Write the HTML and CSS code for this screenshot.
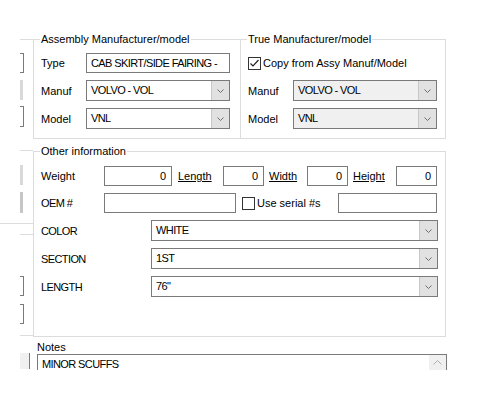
FILE: index.html
```html
<!DOCTYPE html>
<html lang="en">
<head>
    <meta charset="UTF-8">
    <title>Part Details</title>
    <link rel="stylesheet" href="styles.css">
</head>
<body>
    <div class="form">
        <!-- clipped edge of the neighbouring panel -->
        <div class="side">
            <div class="rule rule-a"></div>
            <div class="stub stub-a"></div>
            <div class="bar bar-a"></div>
            <div class="stub stub-b"></div>
            <div class="rule rule-b"></div>
            <div class="bar bar-b"></div>
            <div class="bar bar-c"></div>
            <div class="rule rule-full"></div>
            <div class="rule rule-c"></div>
            <div class="stub stub-c"></div>
            <div class="stub stub-d"></div>
            <div class="rule rule-d"></div>
            <div class="scroll-stub"></div>
        </div>

        <div class="main">
            <div class="top-row">
                <fieldset class="group group-assy">
                    <legend>Assembly Manufacturer/model</legend>
                    <div class="grid">
                        <span>Type</span>
                        <div class="field caps">CAB SKIRT/SIDE FAIRING -</div>
                        <span>Manuf</span>
                        <div class="combo">
                            <span class="value caps">VOLVO - VOL</span>
                            <span class="drop"><svg width="7" height="4" viewBox="0 0 7 4"><path d="M0.5 0.5 3.5 3.5 6.5 0.5"/></svg></span>
                        </div>
                        <span>Model</span>
                        <div class="combo">
                            <span class="value caps">VNL</span>
                            <span class="drop"><svg width="7" height="4" viewBox="0 0 7 4"><path d="M0.5 0.5 3.5 3.5 6.5 0.5"/></svg></span>
                        </div>
                    </div>
                </fieldset>

                <fieldset class="group group-true">
                    <legend>True Manufacturer/model</legend>
                    <div class="grid">
                        <label class="copy">
                            <span class="check"><svg width="11" height="11" viewBox="0 0 11 11"><path d="M1.5 5.5 4 8 9.5 2"/></svg></span>
                            Copy from Assy Manuf/Model
                        </label>
                        <span>Manuf</span>
                        <div class="combo disabled">
                            <span class="value caps">VOLVO - VOL</span>
                            <span class="drop"><svg width="7" height="4" viewBox="0 0 7 4"><path d="M0.5 0.5 3.5 3.5 6.5 0.5"/></svg></span>
                        </div>
                        <span>Model</span>
                        <div class="combo disabled">
                            <span class="value caps">VNL</span>
                            <span class="drop"><svg width="7" height="4" viewBox="0 0 7 4"><path d="M0.5 0.5 3.5 3.5 6.5 0.5"/></svg></span>
                        </div>
                    </div>
                </fieldset>
            </div>

            <fieldset class="group group-other">
                <legend>Other information</legend>
                <div class="rows">
                    <div class="row">
                        <span class="lbl">Weight</span>
                        <div class="field num w-weight">0</div>
                        <span class="ulbl ulbl-length">Length</span>
                        <div class="field num w-dim">0</div>
                        <span class="ulbl ulbl-width">Width</span>
                        <div class="field num w-dim">0</div>
                        <span class="ulbl ulbl-height">Height</span>
                        <div class="field num w-dim">0</div>
                    </div>
                    <div class="row">
                        <span class="lbl caps">OEM #</span>
                        <div class="field w-oem"></div>
                        <label class="serial">
                            <span class="check"></span>
                            Use serial #s
                        </label>
                        <div class="field w-serial"></div>
                    </div>
                    <div class="row row-combo">
                        <span class="lbl-wide caps">COLOR</span>
                        <div class="combo wide">
                            <span class="value caps">WHITE</span>
                            <span class="drop"><svg width="7" height="4" viewBox="0 0 7 4"><path d="M0.5 0.5 3.5 3.5 6.5 0.5"/></svg></span>
                        </div>
                    </div>
                    <div class="row row-combo">
                        <span class="lbl-wide caps">SECTION</span>
                        <div class="combo wide">
                            <span class="value caps">1ST</span>
                            <span class="drop"><svg width="7" height="4" viewBox="0 0 7 4"><path d="M0.5 0.5 3.5 3.5 6.5 0.5"/></svg></span>
                        </div>
                    </div>
                    <div class="row row-combo">
                        <span class="lbl-wide caps">LENGTH</span>
                        <div class="combo wide">
                            <span class="value caps">76"</span>
                            <span class="drop"><svg width="7" height="4" viewBox="0 0 7 4"><path d="M0.5 0.5 3.5 3.5 6.5 0.5"/></svg></span>
                        </div>
                    </div>
                </div>
            </fieldset>

            <div class="notes-label">Notes</div>
            <div class="notes">
                <span class="notes-text caps">MINOR SCUFFS</span>
                <span class="scroll-up"><svg width="9" height="5" viewBox="0 0 9 5"><path d="M0.5 4.5 4.5 0.5 8.5 4.5"/></svg></span>
            </div>
        </div>
    </div>
</body>
</html>
```

FILE: styles.css
```css
body {
    margin: 0;
    font-family: "Liberation Sans", Arial, sans-serif;
    font-size: 11px;
    color: #000;
    background-color: #fff;
}
.form {
    display: flex;
}
.caps {
    letter-spacing: -0.6px;
}

/* neighbouring panel, cut off at the left edge */
.side {
    flex: none;
    width: 33px;
    display: flex;
    flex-direction: column;
}
.rule {
    height: 1px;
    margin-left: 20px;
    background-color: #dcdcdc;
}
.rule-a { margin-top: 39px; }
.rule-b { margin-top: 23px; }
.rule-full { margin-top: 10px; margin-left: 0; }
.rule-c { margin-top: 10px; }
.rule-d { margin-top: 11px; }
.stub {
    box-sizing: border-box;
    width: 4px;
    height: 20px;
    margin-left: 20px;
    border: 1px solid #7a7a7a;
    border-left: none;
}
.stub-a { margin-top: 13px; }
.stub-b { margin-top: 6px; height: 21px; }
.stub-c { margin-top: 41px; }
.stub-d { margin-top: 8px; }
.bar {
    width: 3px;
    height: 20px;
    margin-left: 20px;
    background-color: #d9d9d9;
}
.bar-a { margin-top: 7px; }
.bar-b { margin-top: 14px; }
.bar-c { margin-top: 7px; height: 21px; background-color: #c6c6c6; }
.scroll-stub {
    box-sizing: border-box;
    width: 10px;
    height: 16px;
    margin-top: 17px;
    margin-left: 20px;
    background-color: #f0f0f0;
    border-right: 1px solid #7a7a7a;
}

.main {
    flex: none;
    width: 414px;
    padding-top: 32px;
}
.top-row {
    display: flex;
}

/* group boxes */
.group {
    box-sizing: border-box;
    margin: 0;
    min-width: 0;
    border: 1px solid #dcdcdc;
}
.group legend {
    padding: 0 1px;
    margin-left: -1px;
    line-height: 14px;
}
.group-assy {
    width: 207px;
    border-right: none;
    padding: 7px 10px 9px 7px;
}
.group-true {
    width: 206px;
    padding: 7px 8px 9px 7px;
}
.group-other {
    width: 413px;
    margin-top: 5px;
    padding: 8px 7px 39px 7px;
}
.grid {
    display: grid;
    grid-template-columns: 45px 144px;
    grid-template-rows: 20px 21px 21px;
    row-gap: 7px;
    align-items: center;
}
.copy {
    grid-column: 1 / -1;
    display: flex;
    align-items: center;
    gap: 2px;
}

/* inputs */
.field {
    box-sizing: border-box;
    height: 20px;
    padding: 0 4px;
    border: 1px solid #7a7a7a;
    background-color: #fff;
    line-height: 18px;
    white-space: nowrap;
    overflow: hidden;
}
.field.num {
    text-align: right;
    padding-right: 5px;
}
.combo {
    box-sizing: border-box;
    display: flex;
    height: 21px;
    border: 1px solid #7a7a7a;
    background-color: #fff;
}
.combo.disabled {
    background-color: #f0f0f0;
}
.combo .value {
    flex: 1;
    padding-left: 4px;
    line-height: 19px;
    white-space: nowrap;
}
.drop {
    width: 17px;
    display: flex;
    align-items: center;
    justify-content: center;
    background-color: #e1e1e1;
    border-left: 1px solid #c8c8c8;
}
.drop svg path {
    fill: none;
    stroke: #6d6d6d;
    stroke-width: 1;
}
.check {
    box-sizing: border-box;
    width: 13px;
    height: 13px;
    border: 1px solid #333;
    background-color: #fff;
    display: flex;
    align-items: center;
    justify-content: center;
}
.check svg path {
    fill: none;
    stroke: #222;
    stroke-width: 1.2;
}

/* other information rows */
.rows {
    display: flex;
    flex-direction: column;
    gap: 7px;
}
.row {
    display: flex;
    align-items: center;
    height: 20px;
}
.row-combo {
    height: 21px;
}
.lbl {
    width: 63px;
}
.lbl-wide {
    width: 110px;
}
.ulbl {
    text-decoration: underline;
}
.ulbl-length { margin-left: 6px; width: 45px; }
.ulbl-width { margin-left: 5px; width: 38px; }
.ulbl-height { margin-left: 5px; width: 43px; }
.w-weight { width: 68px; }
.w-dim { width: 41px; }
.w-oem { width: 132px; }
.w-serial { width: 99px; }
.serial {
    width: 96px;
    margin-left: 6px;
    display: flex;
    align-items: center;
    gap: 2px;
}
.combo.wide {
    width: 287px;
}

/* notes */
.notes-label {
    margin: 4px 0 0 4px;
    line-height: 13px;
}
.notes {
    box-sizing: border-box;
    display: flex;
    width: 410px;
    height: 16px;
    margin-left: 4px;
    border: 1px solid #7a7a7a;
    border-bottom: none;
}
.notes-text {
    flex: 1;
    padding: 3px 0 0 4px;
    line-height: 13px;
}
.scroll-up {
    width: 17px;
    display: flex;
    align-items: center;
    justify-content: center;
    background-color: #f0f0f0;
}
.scroll-up svg path {
    fill: none;
    stroke: #b0b0b0;
    stroke-width: 1;
}
```
